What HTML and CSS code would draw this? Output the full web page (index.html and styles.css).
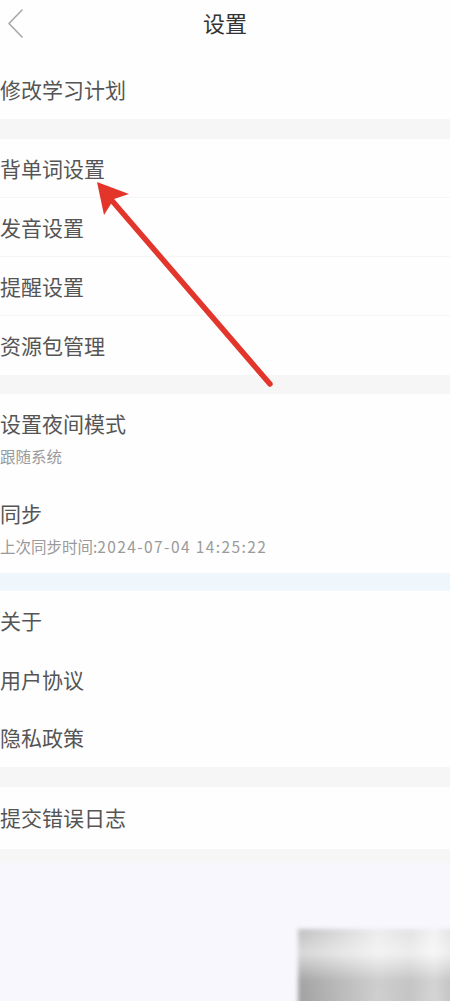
FILE: index.html
```html
<!DOCTYPE html>
<html lang="zh">
<head>
<meta charset="utf-8">
<title>设置</title>
<link rel="stylesheet" href="styles.css">
</head>
<body>
<div class="page">
  <header class="topbar">
    <svg class="back" width="20" height="30" viewBox="0 0 20 30"><path d="M15 1 L2 14.5 L15 28" fill="none" stroke="#a8a8a8" stroke-width="1.6" stroke-linecap="round" stroke-linejoin="round"/></svg>
    <h1 class="title">设置</h1>
  </header>

  <section class="group g1">
    <div class="row">修改学习计划</div>
  </section>
  <div class="band"></div>

  <section class="group">
    <div class="row line">背单词设置</div>
    <div class="row line">发音设置</div>
    <div class="row line">提醒设置</div>
    <div class="row">资源包管理</div>
  </section>
  <div class="band b2"></div>

  <section class="group">
    <div class="row two"><span class="main">设置夜间模式</span><span class="sub">跟随系统</span></div>
    <div class="row two"><span class="main">同步</span><span class="sub">上次同步时间:<span class="time">2024-07-04 14:25:22</span></span></div>
  </section>
  <div class="band blue"></div>

  <section class="group">
    <div class="row r4">关于</div>
    <div class="row r4">用户协议</div>
    <div class="row r4">隐私政策</div>
  </section>
  <div class="band"></div>

  <section class="group">
    <div class="row last">提交错误日志</div>
  </section>
  <div class="band end"></div>

  <svg class="arrow" width="450" height="1001" viewBox="0 0 450 1001">
    <line x1="270" y1="384" x2="108" y2="196" stroke="#e2362c" stroke-width="5.5" stroke-linecap="round"/>
    <polygon points="97,182 129,194 114,199 104,215" fill="#e4352b"/>
  </svg>
  <div class="mark"></div>
</div>
</body>
</html>
```

FILE: styles.css
```css
html, body {
  margin: 0;
  padding: 0;
  background: #f8f7fd;
}
.page {
  position: relative;
  width: 450px;
  min-height: 1001px;
  overflow: hidden;
  font-family: "Noto Sans CJK SC", "Noto Sans", sans-serif;
  background: #f8f7fd;
}
.topbar {
  position: relative;
  height: 61px;
  background: #fefefe;
  display: flex;
  justify-content: center;
  align-items: flex-start;
}
.back {
  position: absolute;
  left: 7px;
  top: 9px;
}
.title {
  margin: 0;
  margin-top: 8px;
  font-size: 22px;
  font-weight: 400;
  color: #333;
  line-height: 28px;
}
.group {
  background: #fefefe;
  display: flex;
  flex-direction: column;
}
.row {
  height: 59px;
  display: flex;
  align-items: center;
  font-size: 21px;
  color: #555;
  box-sizing: border-box;
  line-height: 1;
}
.row.line {
  border-bottom: 1px solid #f5f5f5;
}
.g1 .row {
  margin-top: -1px;
}
.row.two {
  height: 89.5px;
  flex-direction: column;
  align-items: flex-start;
  justify-content: flex-start;
  padding-top: 19px;
}
.row.two .main {
  font-size: 21px;
  color: #555;
}
.row.two .sub {
  margin-top: 15px;
  font-size: 15.5px;
  color: #9a9a9a;
}
.time {
  letter-spacing: 1.4px;
}
.row.r4 {
  height: 58.7px;
}
.row.last {
  height: 62px;
  padding-bottom: 2px;
}
.band {
  height: 20px;
  background: #f6f6f6;
}
.band.b2 {
  height: 19px;
}
.band.blue {
  height: 18px;
  background: #eff6fc;
}
.band.end {
  height: 14px;
  background: #f6f6f7;
}
.arrow {
  position: absolute;
  left: 0;
  top: 0;
  pointer-events: none;
}
.mark {
  position: absolute;
  left: 298px;
  top: 929px;
  width: 160px;
  height: 80px;
  background:
    linear-gradient(180deg, rgba(255,255,255,0.25) 0%, rgba(255,255,255,0.55) 30%, rgba(150,150,150,0.3) 65%, rgba(120,120,120,0.2) 100%),
    linear-gradient(90deg, #a9a9a9 0%, #c9c9c9 25%, #e6e6e6 50%, #d8d8d8 70%, #eeeeee 85%, #d0d0d0 100%);
  filter: blur(2px);
}
```
